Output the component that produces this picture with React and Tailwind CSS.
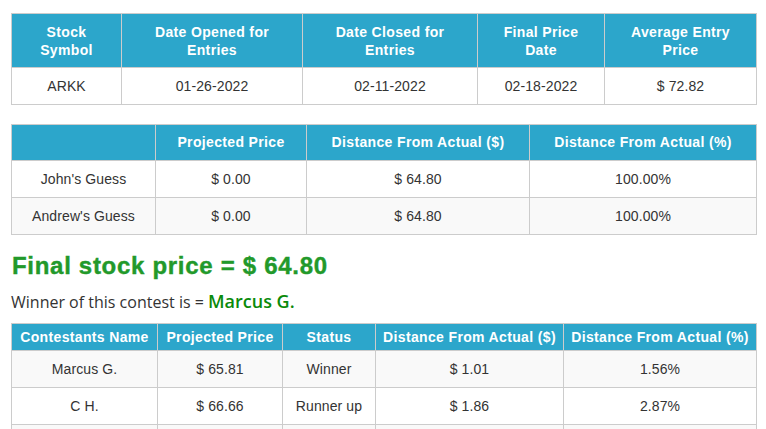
import React from "react";

const th = "border border-[#cccccc] bg-[#2ca6cb] text-white font-bold text-[14px] tracking-[0.35px] text-center px-1";
const td = "border border-[#cccccc] text-[#333333] text-[14px] tracking-[0.1px] text-center px-2 h-[37px]";

export default function App() {
  return (
    <div className="bg-white w-[766px] h-[429px] overflow-hidden pl-[11px] pt-[13px]" style={{ fontFamily: '"Liberation Sans", Arial, sans-serif' }}>
      <table className="table-fixed border-collapse w-[745px]">
        <colgroup>
          <col className="w-[110px]" />
          <col className="w-[181px]" />
          <col className="w-[175px]" />
          <col className="w-[127px]" />
          <col className="w-[152px]" />
        </colgroup>
        <thead>
          <tr className="h-[54px]">
            <th className={`${th} leading-[18px]`}>Stock<br />Symbol</th>
            <th className={`${th} leading-[18px]`}>Date Opened for<br />Entries</th>
            <th className={`${th} leading-[18px]`}>Date Closed for<br />Entries</th>
            <th className={`${th} leading-[18px]`}>Final Price<br />Date</th>
            <th className={`${th} leading-[18px]`}>Average Entry<br />Price</th>
          </tr>
        </thead>
        <tbody>
          <tr className="bg-white">
            <td className={td}>ARKK</td>
            <td className={td}>01-26-2022</td>
            <td className={td}>02-11-2022</td>
            <td className={td}>02-18-2022</td>
            <td className={td}>$ 72.82</td>
          </tr>
        </tbody>
      </table>

      <table className="table-fixed border-collapse w-[745px] mt-[19px]">
        <colgroup>
          <col className="w-[144px]" />
          <col className="w-[151px]" />
          <col className="w-[223px]" />
          <col className="w-[227px]" />
        </colgroup>
        <thead>
          <tr className="h-[36px]">
            <th className={th}></th>
            <th className={th}>Projected Price</th>
            <th className={th}>Distance From Actual ($)</th>
            <th className={th}>Distance From Actual (%)</th>
          </tr>
        </thead>
        <tbody>
          <tr className="bg-white">
            <td className={td}>John's Guess</td>
            <td className={td}>$ 0.00</td>
            <td className={td}>$ 64.80</td>
            <td className={td}>100.00%</td>
          </tr>
          <tr className="bg-[#f9f9f9]">
            <td className={td}>Andrew's Guess</td>
            <td className={td}>$ 0.00</td>
            <td className={td}>$ 64.80</td>
            <td className={td}>100.00%</td>
          </tr>
        </tbody>
      </table>

      <h1 className="mt-[18px] text-[24px] leading-[26px] font-bold tracking-[0.7px] text-[#22992a] pl-px [-webkit-text-stroke:0.4px_#22992a]">Final stock price = $ 64.80</h1>

      <p className="mt-[11px] text-[16px] leading-[22px] text-[#333333]" style={{ fontFamily: '"Open Sans", sans-serif' }}>
        Winner of this contest is = <span className="text-[18px] font-semibold text-[#0a8a0a]">Marcus G.</span>
      </p>

      <table className="table-fixed border-collapse w-[745px] mt-[10px]">
        <colgroup>
          <col className="w-[146px]" />
          <col className="w-[125px]" />
          <col className="w-[93px]" />
          <col className="w-[188px]" />
          <col className="w-[193px]" />
        </colgroup>
        <thead>
          <tr className="h-[27px]">
            <th className={th}>Contestants Name</th>
            <th className={th}>Projected Price</th>
            <th className={th}>Status</th>
            <th className={th}>Distance From Actual ($)</th>
            <th className={th}>Distance From Actual (%)</th>
          </tr>
        </thead>
        <tbody>
          <tr className="bg-[#f9f9f9]">
            <td className={td}>Marcus G.</td>
            <td className={td}>$ 65.81</td>
            <td className={td}>Winner</td>
            <td className={td}>$ 1.01</td>
            <td className={td}>1.56%</td>
          </tr>
          <tr className="bg-white">
            <td className={td}>C H.</td>
            <td className={td}>$ 66.66</td>
            <td className={td}>Runner up</td>
            <td className={td}>$ 1.86</td>
            <td className={td}>2.87%</td>
          </tr>
          <tr className="bg-[#f9f9f9]">
            <td className={td}>&nbsp;</td>
            <td className={td}>&nbsp;</td>
            <td className={td}>&nbsp;</td>
            <td className={td}>&nbsp;</td>
            <td className={td}>&nbsp;</td>
          </tr>
        </tbody>
      </table>
    </div>
  );
}
